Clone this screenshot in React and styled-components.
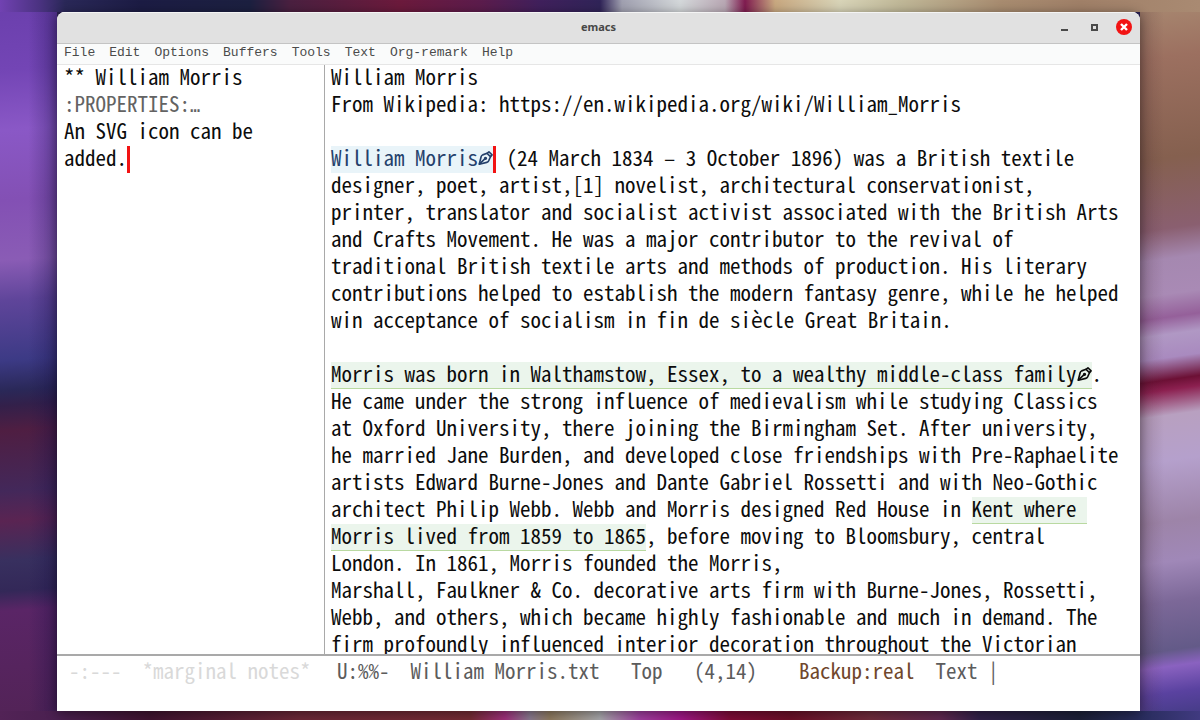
import React from "react";
import styled, { createGlobalStyle } from "styled-components";

const GlobalStyle = createGlobalStyle`
  *, *::before, *::after { box-sizing: border-box; }
  body { margin: 0; background: #2a2050; }
`;

const Desktop = styled.div`
  min-height: 100vh;
  display: flex;
  padding: 12px 60px 9px 57px;
  background:
    linear-gradient(to right, #7142b2, #4a3280 40px, #2a2858 65px, #1c1c44 140px, #1c2040 250px, #4a2040 290px, #6c1a3c 400px, #5c1c4c 480px, #40205c 540px, #302458 600px, #a0a0b0 622px, #d4d8da 680px, #b9a8b4 725px, #801c50 745px, #c8a880 775px, #d8d4b8 840px, #c0b898 900px, #a88c70 1000px, #a08068 1080px, #a98a72) top / 100% 12px no-repeat,
    linear-gradient(to right, #522356, #4a2050 57px, #401430 150px, #6c2838 300px, #752c34 470px, #a0307c 505px, #8a7a90 530px, #907c60 550px, #a8a8ac 600px, #a040a0 640px, #a01888 680px, #800c38 730px, #6c1028 790px, #702c3c 870px, #602850 940px, #302048 980px, #1c2038 1080px, #282c5c 1140px, #403a80) bottom / 100% 9px no-repeat,
    linear-gradient(to right, transparent 50%, rgba(24, 16, 70, 0.35)) left / 57px 100% no-repeat,
    linear-gradient(to left, transparent 60%, rgba(60, 30, 40, 0.2)) right / 60px 100% no-repeat,
    linear-gradient(176deg, #6a3fac, #7345b5 70px, #8a58c6 130px, #8350b4 200px, #8a5cb5 260px, #5f459a 300px, #3c3a85 360px, #2a2858 390px, #33204a 405px, #4f1e42 430px, #43285a 490px, #5a2452 520px, #38305f 560px, #332858 590px, #5a2566 610px, #522356) left / 57px 100% no-repeat,
    linear-gradient(172deg, #a98a72, #9c7060 60px, #85604f 160px, #8a5f70 230px, #a588b0 260px, #a98ab5 295px, #95609a 318px, #b098c4 335px, #a98abf 358px, #6c1035 380px, #8c2050 390px, #b8a0c0 415px, #b5a0cc 460px, #9d84a8 520px, #a088b8 560px, #7c6898 600px, #635a88 648px, #8a62c0 664px, #5a42a0 690px, #403a80) right / 60px 100% no-repeat;
`;

const Frame = styled.main`
  flex: 1;
  min-width: 0;
  display: flex;
  flex-direction: column;
  overflow: hidden;
  background: #fff;
  border-radius: 8px 8px 0 0;
  box-shadow: 0 2px 12px rgba(0, 0, 0, 0.45);
`;

const TitleBar = styled.header`
  display: grid;
  grid-template-columns: 1fr auto 1fr;
  align-items: center;
  height: 32px;
  padding: 0 8px 2px;
  background: #e1e1e1;
  border-top: 1px solid #f4f4f4;
  border-bottom: 1px solid #c4c4c4;
`;

const Title = styled.h1`
  grid-column: 2;
  margin: 0;
  font: 700 11px/16px "Noto Sans", "Open Sans", sans-serif;
  color: #474747;
`;

const WindowButtons = styled.div`
  justify-self: end;
  display: flex;
  gap: 14px;
`;

const WindowButton = styled.button`
  width: 16px;
  height: 16px;
  padding: 0;
  border: 0;
  border-radius: 50%;
  background: ${(p) => (p.$close ? "#f21313" : "transparent")};
  color: ${(p) => (p.$close ? "#fff" : "#4a4a4a")};

  svg { display: block; }
`;

const MenuBar = styled.nav`
  display: flex;
  gap: 14px;
  height: 21px;
  padding: 0 7px 2px;
  background: #fafbfb;
  border-bottom: 1px solid #e6e6e6;
`;

const MenuButton = styled.button`
  padding: 0;
  border: 0;
  background: none;
  font: 13px/18px "Liberation Mono", monospace;
  color: #4b4b4b;
`;

const Panes = styled.div`
  flex: 1 1 0;
  min-height: 0;
  display: grid;
  grid-template-columns: 268px minmax(0, 1fr);
`;

const Pane = styled.section`
  min-width: 0;
  overflow: hidden;
  padding: 0 0 0 ${(p) => (p.$notes ? "7px" : "6px")};
  border-right: ${(p) => (p.$notes ? "1px solid #a9a9a9" : "0")};
  font: 21px/23px "Noto Sans Mono CJK JP", "DejaVu Sans Mono", monospace;
  color: #0c0c0c;
`;

const Line = styled.p`
  margin: 0;
  height: 27px;
  white-space: pre;
  color: ${(p) => (p.$dim ? "#636363" : "inherit")};
`;

const Ellipsis = styled.span`
  font: 17px/20px "DejaVu Sans Mono", monospace;
`;

const Mark = styled.mark`
  display: inline-block;
  height: 27px;
  vertical-align: top;
  background: ${(p) => (p.$blue ? "#e9f4f9" : "#ebf5ec")};
  color: ${(p) => (p.$blue ? "#24406b" : "inherit")};
  border-bottom: ${(p) => (p.$blue ? "0" : "1px solid #b9d9a1")};
`;

const Cursor = styled.span`
  display: inline-block;
  width: 3px;
  height: 27px;
  vertical-align: top;
  background: #f21313;
`;

const Nib = styled.svg`
  display: inline-block;
  vertical-align: top;
  margin-top: 4px;
`;

const ModeLines = styled.footer`
  display: grid;
  grid-template-columns: 268px minmax(0, 1fr);
  height: 57px;
  padding-top: 3px;
  border-top: 2px solid #a9a9a9;
  font: 21px/23px "Noto Sans Mono CJK JP", "DejaVu Sans Mono", monospace;
`;

const ModeLine = styled.div`
  display: flex;
  gap: ${(p) => (p.$inactive ? "21px" : "0")};
  padding-left: 12px;
  white-space: pre;
  color: ${(p) => (p.$inactive ? "#d9d9d9" : "#5c5c5c")};
`;

const Minor = styled.span`
  color: #70472c;
`;

function PenIcon() {
  return (
    <Nib width="15" height="16" viewBox="0 0 24 24" fill="none" stroke="currentColor" strokeWidth="2.6" strokeLinejoin="round" strokeLinecap="round" aria-hidden="true">
      <path d="M14.500 4.500 L17.500 2 L22.500 7 L20 10 Z" />
      <path d="M14.500 4.500 L7.500 7 Q5.500 8 5 10 L2 22 L14 19 Q16 18.500 17 16.500 L20 10" />
      <path d="M2.500 21.500 L11 13.500" />
      <circle cx="12" cy="12.500" r="1.400" />
    </Nib>
  );
}

const MENUS = ["File", "Edit", "Options", "Buffers", "Tools", "Text", "Org-remark", "Help"];

const INTRO = [
  "designer, poet, artist,[1] novelist, architectural conservationist,",
  "printer, translator and socialist activist associated with the British Arts",
  "and Crafts Movement. He was a major contributor to the revival of",
  "traditional British textile arts and methods of production. His literary",
  "contributions helped to establish the modern fantasy genre, while he helped",
  "win acceptance of socialism in fin de siècle Great Britain.",
];

const LIFE = [
  "He came under the strong influence of medievalism while studying Classics",
  "at Oxford University, there joining the Birmingham Set. After university,",
  "he married Jane Burden, and developed close friendships with Pre-Raphaelite",
  "artists Edward Burne-Jones and Dante Gabriel Rossetti and with Neo-Gothic",
];

const LATER = [
  "London. In 1861, Morris founded the Morris,",
  "Marshall, Faulkner & Co. decorative arts firm with Burne-Jones, Rossetti,",
  "Webb, and others, which became highly fashionable and much in demand. The",
  "firm profoundly influenced interior decoration throughout the Victorian",
];

const renderLines = (lines) => lines.map((text) => <Line key={text}>{text}</Line>);

export default function App() {
  return (
    <>
      <GlobalStyle />
      <Desktop>
        <Frame>
          <TitleBar>
            <Title>emacs</Title>
            <WindowButtons>
              <WindowButton type="button" aria-label="Minimize">
                <svg width="16" height="16" viewBox="0 0 16 16"><path d="M5 11h7" stroke="currentColor" strokeWidth="2" /></svg>
              </WindowButton>
              <WindowButton type="button" aria-label="Maximize">
                <svg width="16" height="16" viewBox="0 0 16 16"><path d="M6 6h5v5h-5z" fill="none" stroke="currentColor" strokeWidth="2" /></svg>
              </WindowButton>
              <WindowButton type="button" aria-label="Close" $close>
                <svg width="16" height="16" viewBox="0 0 16 16"><path d="M5 5l6 6M11 5l-6 6" stroke="currentColor" strokeWidth="2.400" /></svg>
              </WindowButton>
            </WindowButtons>
          </TitleBar>
          <MenuBar>
            {MENUS.map((name) => <MenuButton key={name} type="button">{name}</MenuButton>)}
          </MenuBar>
          <Panes>
            <Pane $notes>
              <Line>** William Morris</Line>
              <Line $dim>:PROPERTIES:<Ellipsis>…</Ellipsis></Line>
              <Line>An SVG icon can be</Line>
              <Line>added.<Cursor /></Line>
            </Pane>
            <Pane>
              <Line>William Morris</Line>
              <Line>From Wikipedia: https://en.wikipedia.org/wiki/William_Morris</Line>
              <Line />
              <Line><Mark $blue>William Morris<PenIcon /></Mark><Cursor /> (24 March 1834 – 3 October 1896) was a British textile</Line>
              {renderLines(INTRO)}
              <Line />
              <Line><Mark>Morris was born in Walthamstow, Essex, to a wealthy middle-class family<PenIcon /></Mark>.</Line>
              {renderLines(LIFE)}
              <Line>architect Philip Webb. Webb and Morris designed Red House in <Mark>Kent where </Mark></Line>
              <Line><Mark>Morris lived from 1859 to 1865</Mark>, before moving to Bloomsbury, central</Line>
              {renderLines(LATER)}
            </Pane>
          </Panes>
          <ModeLines>
            <ModeLine $inactive><span>-:---</span><span>*marginal notes*</span></ModeLine>
            <ModeLine>{"U:%%-  William Morris.txt   Top   (4,14)    "}<Minor>Backup:real</Minor>{"  Text |"}</ModeLine>
          </ModeLines>
        </Frame>
      </Desktop>
    </>
  );
}
